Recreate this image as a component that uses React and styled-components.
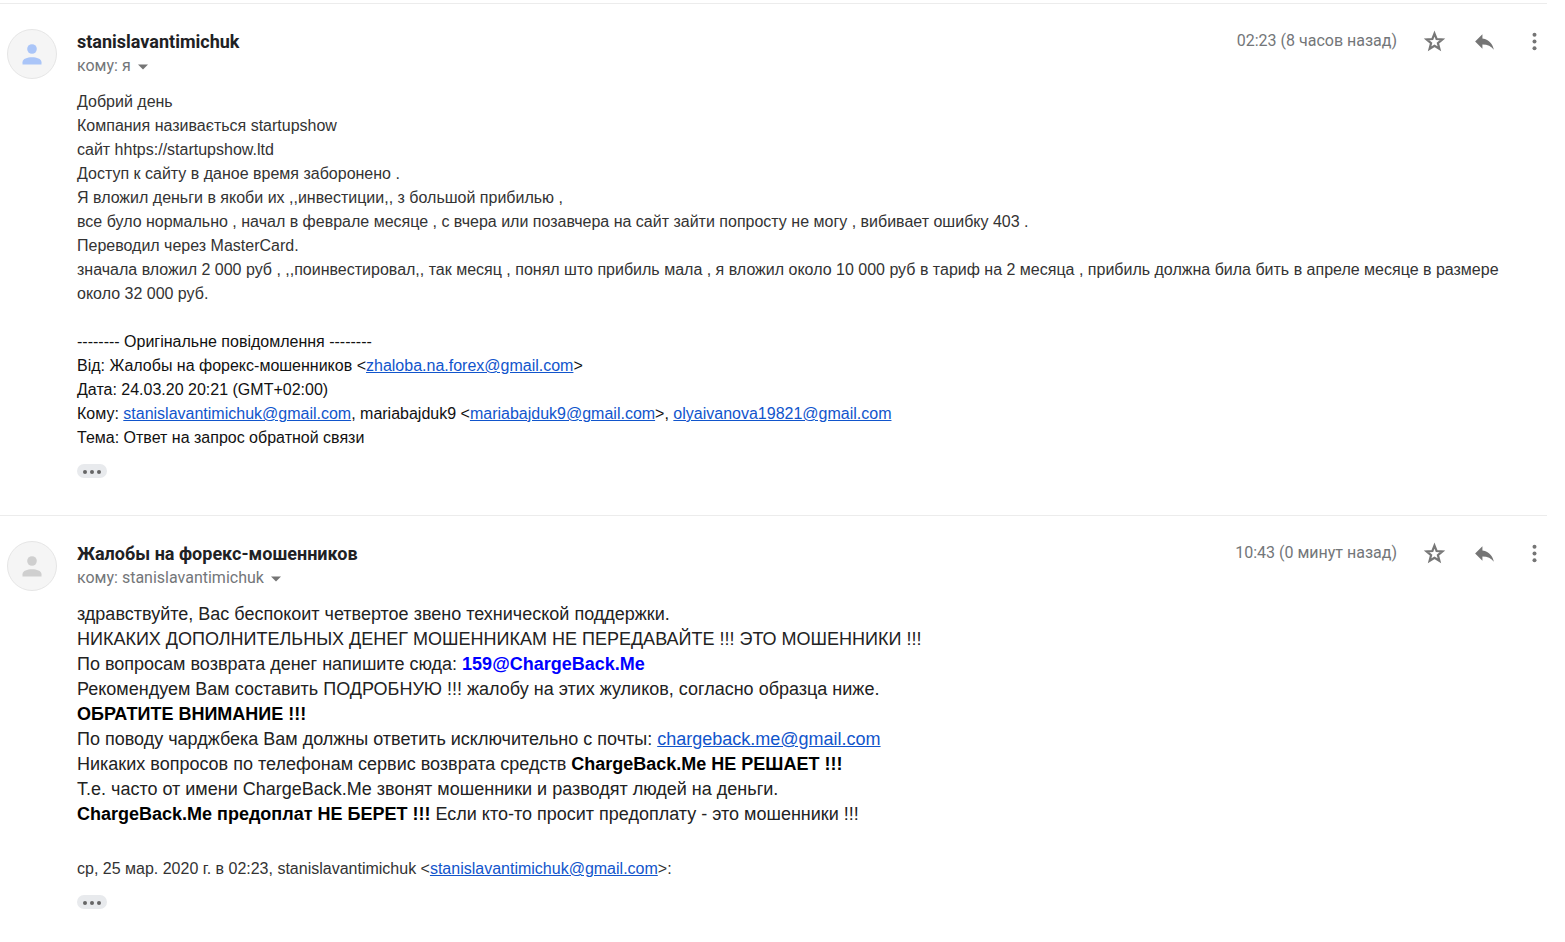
import styled, {createGlobalStyle} from 'styled-components';

function App() {
    return (
        <>
            <GlobalStyle/>
            <Thread>
                <Message
                    sender="stanislavantimichuk"
                    to="я"
                    time="02:23 (8 часов назад)"
                    color="#aac5f8"
                >
                    <Body>
                        <Line>Добрий день</Line>
                        <Line>Компания називається startupshow</Line>
                        <Line>сайт hhtps://startupshow.ltd</Line>
                        <Line>Доступ к сайту в даное время заборонено .</Line>
                        <Line>Я вложил деньги в якоби их ,,инвестиции,, з большой прибилью ,</Line>
                        <Line>все було нормально , начал в феврале месяце , с вчера или позавчера на сайт зайти попросту не могу , вибивает ошибку 403 .</Line>
                        <Line>Переводил через MasterCard.</Line>
                        <Line>значала вложил 2 000 руб , ,,поинвестировал,, так месяц , понял што прибиль мала , я вложил около 10 000 руб в тариф на 2 месяца , прибиль должна била бить в апреле месяце в размере около 32 000 руб.</Line>
                    </Body>
                    <Original>
                        <Line>-------- Оригінальне повідомлення --------</Line>
                        <Line>Від: Жалобы на форекс-мошенников &lt;<Mail address="zhaloba.na.forex@gmail.com"/>&gt;</Line>
                        <Line>Дата: 24.03.20 20:21 (GMT+02:00)</Line>
                        <Line>
                            Кому: <Mail address="stanislavantimichuk@gmail.com"/>, mariabajduk9 &lt;<Mail address="mariabajduk9@gmail.com"/>&gt;, <Mail address="olyaivanova19821@gmail.com"/>
                        </Line>
                        <Line>Тема: Ответ на запрос обратной связи</Line>
                    </Original>
                </Message>
                <Message
                    sender="Жалобы на форекс-мошенников"
                    to="stanislavantimichuk"
                    time="10:43 (0 минут назад)"
                    color="#cfcfcf"
                >
                    <Answer>
                        <Line>здравствуйте, Вас беспокоит четвертое звено технической поддержки.</Line>
                        <Line>НИКАКИХ ДОПОЛНИТЕЛЬНЫХ ДЕНЕГ МОШЕННИКАМ НЕ ПЕРЕДАВАЙТЕ !!! ЭТО МОШЕННИКИ !!!</Line>
                        <Line>По вопросам возврата денег напишите сюда: <Contact>159@ChargeBack.Me</Contact></Line>
                        <Line>Рекомендуем Вам составить ПОДРОБНУЮ !!! жалобу на этих жуликов, согласно образца ниже.</Line>
                        <Line><Strong>ОБРАТИТЕ ВНИМАНИЕ !!!</Strong></Line>
                        <Line>По поводу чарджбека Вам должны ответить исключительно с почты: <Mail address="chargeback.me@gmail.com"/></Line>
                        <Line>Никаких вопросов по телефонам сервис возврата средств <Strong>ChargeBack.Me НЕ РЕШАЕТ !!!</Strong></Line>
                        <Line>Т.е. часто от имени ChargeBack.Me звонят мошенники и разводят людей на деньги.</Line>
                        <Line><Strong>ChargeBack.Me предоплат НЕ БЕРЕТ !!!</Strong> Если кто-то просит предоплату - это мошенники !!!</Line>
                    </Answer>
                    <Quote>
                        ср, 25 мар. 2020 г. в 02:23, stanislavantimichuk &lt;<Mail address="stanislavantimichuk@gmail.com"/>&gt;:
                    </Quote>
                </Message>
            </Thread>
        </>
    )
}

function Message({sender, to, time, color, children}) {
    return (
        <Container>
            <Avatar>
                <Person color={color}/>
            </Avatar>
            <Content>
                <Header>
                    <Sender>{sender}</Sender>
                    <Actions>
                        <Time>{time}</Time>
                        <IconButton aria-label="Пометить">
                            <Star/>
                        </IconButton>
                        <IconButton aria-label="Ответить">
                            <Reply/>
                        </IconButton>
                        <IconButton aria-label="Ещё">
                            <Kebab/>
                        </IconButton>
                    </Actions>
                </Header>
                <Recipient>
                    кому: {to}
                    <IconButton aria-label="Показать детали">
                        <Caret/>
                    </IconButton>
                </Recipient>
                {children}
                <MoreButton aria-label="Показать скрытый текст">
                    <Dot/>
                    <Dot/>
                    <Dot/>
                </MoreButton>
            </Content>
        </Container>
    )
}

function Mail({address}) {
    return <MailLink href={`mailto:${address}`}>{address}</MailLink>
}

function Person({color}) {
    return (
        <svg width="20" height="21" viewBox="0 0 20 21" fill={color} aria-hidden="true">
            <circle cx="10" cy="5" r="4.8"/>
            <path d="M0.5 20.5v-2.3c0-3.6 5-5 9.5-5s9.5 1.4 9.5 5v2.3z"/>
        </svg>
    )
}

function Star() {
    return (
        <svg width="25" height="25" viewBox="0 0 25 25" fill="none" stroke="#777" strokeWidth="2.2" aria-hidden="true">
            <path d="M12.5 4.6l2.1 5.4 5.8.4-4.5 3.7 1.5 5.7-4.9-3.1-4.9 3.1 1.5-5.7-4.5-3.7 5.8-.4z"/>
        </svg>
    )
}

function Reply() {
    return (
        <svg width="25" height="25" viewBox="0 0 24 24" fill="#757575" aria-hidden="true">
            <path d="M10 9V5l-7 7 7 7v-4.100c5 0 8.500 1.600 11 5.100-1-5-4-10-11-11z"/>
        </svg>
    )
}

function Kebab() {
    return (
        <svg width="25" height="25" viewBox="0 0 25 25" fill="#757575" aria-hidden="true">
            <circle cx="12.5" cy="5.700" r="2"/>
            <circle cx="12.500" cy="12.500" r="2"/>
            <circle cx="12.500" cy="19.300" r="2"/>
        </svg>
    )
}

function Caret() {
    return (
        <svg width="24" height="24" viewBox="0 0 24 24" fill="#757575" aria-hidden="true">
            <path d="M7 10.500h10l-5 5z"/>
        </svg>
    )
}

const GlobalStyle = createGlobalStyle`
  body {
    margin: 0;
    background: #fff;
    font-family: "Liberation Sans", Arial, sans-serif;
  }
`;
const Thread = styled.main`
  padding: 3px 18px 0 0;
`;
const Container = styled.article`
  display: flex;
  align-items: flex-start;
  gap: 20px;
  padding: 25px 0 37px 7px;
  border-top: 1px solid #ececec;
`;
const Avatar = styled.div`
  display: flex;
  justify-content: center;
  align-items: center;
  flex: none;
  width: 50px;
  height: 50px;
  box-sizing: border-box;
  border: 1px solid #e6e6e6;
  border-radius: 50%;
  background: #f5f5f5;
`;
const Content = styled.div`
  flex: 1;
  min-width: 0;
`;
const Header = styled.header`
  display: flex;
  justify-content: space-between;
  align-items: center;
  height: 25px;
`;
const Sender = styled.h3`
  margin: 0;
  font: 700 18px/25px Roboto, sans-serif;
  color: #202124;
`;
const Actions = styled.div`
  display: flex;
  align-items: flex-start;
  gap: 25px;
`;
const Time = styled.span`
  font: 400 16px/24px Roboto, sans-serif;
  color: #737679;
`;
const IconButton = styled.button`
  display: flex;
  padding: 0;
  border: 0;
  background: none;
  cursor: pointer;
`;
const Recipient = styled.div`
  display: flex;
  align-items: center;
  height: 24px;
  margin-bottom: 12px;
  font: 400 16px/24px Roboto, sans-serif;
  color: #737679;
`;
const Body = styled.div`
  padding-right: 16px;
  font-size: 16px;
  line-height: 24px;
  color: #333;
`;
const Original = styled(Body)`
  margin-top: 24px;
  color: #111;
`;
const Answer = styled(Body)`
  font-size: 18px;
  line-height: 25px;
  color: #222;
`;
const Quote = styled(Body)`
  margin-top: 30px;
`;
const Line = styled.div`
  overflow-wrap: break-word;
`;
const MailLink = styled.a`
  color: #15c;
  text-decoration: underline;
`;
const Strong = styled.b`
  color: #000;
`;
const Contact = styled.b`
  color: #00f;
`;
const MoreButton = styled.button`
  display: flex;
  justify-content: center;
  align-items: center;
  gap: 3px;
  width: 30px;
  height: 14px;
  margin-top: 14px;
  padding: 1px 0 0;
  border: 0;
  border-radius: 7px;
  background: #e8eaed;
  cursor: pointer;
`;
const Dot = styled.span`
  width: 4px;
  height: 4px;
  border-radius: 50%;
  background: #666;
`;

export default App;
